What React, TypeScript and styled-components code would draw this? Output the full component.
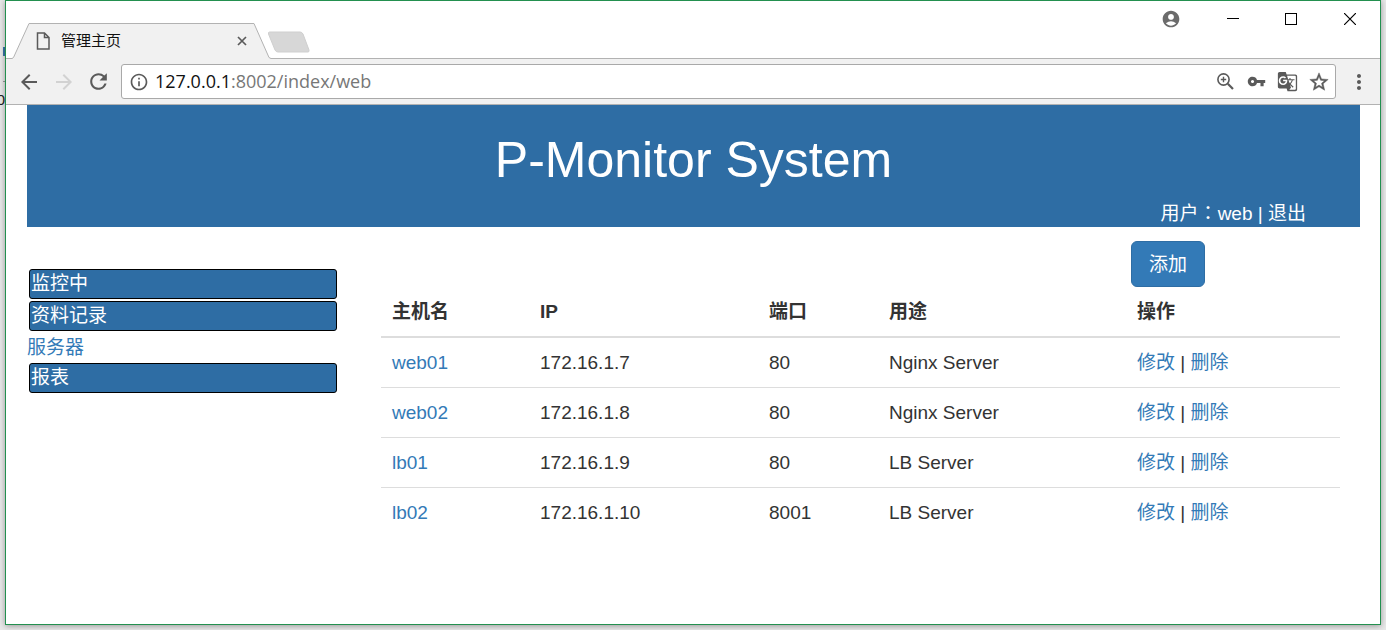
import React from "react";
import styled, { createGlobalStyle } from "styled-components";
import {
  MdAccountCircle,
  MdArrowBack,
  MdArrowForward,
  MdGTranslate,
  MdInfoOutline,
  MdMoreVert,
  MdRefresh,
  MdVpnKey,
} from "react-icons/md";

const GlobalStyle = createGlobalStyle`
  *, *::before, *::after { box-sizing: border-box; }
  body {
    margin: 0;
    background: #e8e8e8;
    color: #333;
    font: 19px/27px "Liberation Sans", "Noto Sans CJK SC", sans-serif;
  }
  button { font: inherit; cursor: pointer; }
  svg { display: block; }
`;

const Desktop = styled.div`
  position: relative;
  display: flex;
  min-height: 100vh;
  padding: 0 5px 5px;
  overflow: hidden;
`;

const BehindWindow = styled.div`
  position: absolute;
  top: 0;
  left: 0;
  width: 5px;
  height: 100%;
  overflow: hidden;
`;

const BehindPiece = styled.div<{ $top: number; $height: number; $color: string }>`
  position: absolute;
  top: ${(p) => p.$top}px;
  right: 0;
  width: 2px;
  height: ${(p) => p.$height}px;
  background: ${(p) => p.$color};
`;

const BehindText = styled.span`
  position: absolute;
  top: 90px;
  right: 0;
  font-size: 15px;
  line-height: 20px;
  color: #222;
`;

const Window = styled.div`
  position: relative;
  flex: 1;
  min-width: 0;
  border: 1px solid #23904f;
  background: #fff;
  box-shadow: 0 1px 6px rgba(0, 0, 0, 0.35);
`;

const TitleBar = styled.header`
  display: flex;
  justify-content: space-between;
  align-items: flex-start;
  height: 58px;
  border-bottom: 1px solid #b2b2b2;
`;

const TabStrip = styled.div`
  display: flex;
  align-items: flex-end;
  padding: 22px 0 0 6px;
`;

const Tab = styled.div`
  position: relative;
  display: flex;
  align-items: center;
  width: 259px;
  height: 36px;
  padding: 0 23px 0 24px;
  color: #111;
  font-size: 15px;
  line-height: 20px;
`;

const TabShape = styled.svg`
  position: absolute;
  inset: 0;
  width: 100%;
  height: 100%;
`;

const TabTitle = styled.span`
  position: relative;
  flex: 1;
  margin-left: 11px;
`;

const PageGlyph = styled.svg`
  position: relative;
`;

const IconButton = styled.button<{ $width: number; $height: number; $color?: string }>`
  position: relative;
  display: flex;
  flex: none;
  align-items: center;
  justify-content: center;
  width: ${(p) => p.$width}px;
  height: ${(p) => p.$height}px;
  padding: 0;
  border: 0;
  background: none;
  color: ${(p) => p.$color ?? "#5a5a5a"};
`;

const NewTab = styled(IconButton)`
  margin: 0 0 6px -4px;
`;

const WindowControls = styled.div`
  display: flex;
  align-items: center;
`;

const Toolbar = styled.div`
  display: flex;
  align-items: center;
  height: 46px;
  padding: 0 4px 0 5px;
  border-bottom: 1px solid #b2b2b2;
  background: #f1f1f1;
`;

const AddressBar = styled.div`
  display: flex;
  flex: 1;
  align-items: center;
  min-width: 0;
  height: 35px;
  margin: 0 6px 0 5px;
  padding: 0 1px 0 7px;
  border: 1px solid #a9a9a9;
  border-radius: 3px;
  background: #fff;
`;

const Address = styled.span`
  flex: 1;
  margin-left: 6px;
  overflow: hidden;
  color: #777;
  font-family: "Open Sans", sans-serif;
  font-size: 18px;
  white-space: nowrap;
`;

const Host = styled.span`
  color: #111;
`;

const Page = styled.div`
  padding: 0 20px 40px 21px;
`;

const Banner = styled.div`
  height: 122px;
  background: #2e6da4;
  color: #fff;
`;

const BannerTitle = styled.h1`
  margin: 0;
  padding-top: 27px;
  font-size: 50px;
  font-weight: 400;
  line-height: 56px;
  text-align: center;
`;

const UserLine = styled.div`
  padding: 10px 54px 0 0;
  text-align: right;
`;

const CenteredColon = styled.span`
  font-family: "Noto Sans CJK TC", sans-serif;
`;

const BannerLink = styled.a`
  color: #fff;
  text-decoration: none;
`;

const Columns = styled.div`
  display: grid;
  grid-template-columns: 312fr 959fr;
  gap: 42px;
  padding-right: 20px;
`;

const Sidebar = styled.nav`
  display: flex;
  flex-direction: column;
  gap: 2px;
  padding-top: 42px;
`;

const MenuHead = styled.button`
  height: 30px;
  margin: 0 2px;
  padding: 0 1px;
  border: 1px solid #000;
  border-radius: 3px;
  background: #2e6da4;
  color: #fff;
  line-height: 26px;
  text-align: left;
`;

const TextLink = styled.a`
  color: #337ab7;
  text-decoration: none;
`;

const MenuLink = styled(TextLink)`
  height: 28px;
  line-height: 30px;
`;

const Actions = styled.div`
  display: flex;
  justify-content: flex-end;
  padding: 14px 135px 0 0;
`;

const AddButton = styled.button`
  height: 46px;
  padding: 0 17px;
  border: 1px solid #2e6da4;
  border-radius: 6px;
  background: #337ab7;
  color: #fff;
`;

const HostTable = styled.table`
  width: 100%;
  border-spacing: 0;
  table-layout: fixed;
`;

const Head = styled.th<{ $width: number }>`
  width: ${(p) => p.$width}px;
  padding: 11px;
  border-bottom: 2px solid #ddd;
  text-align: left;
`;

const Cell = styled.td`
  height: 50px;
  padding: 0 11px;
  border-bottom: 1px solid #ddd;

  tr:last-child > & { border-bottom-color: transparent; }
`;

const columns = [
  { label: "主机名", width: 148 },
  { label: "IP", width: 229 },
  { label: "端口", width: 120 },
  { label: "用途", width: 248 },
  { label: "操作", width: 214 },
];

const hosts = [
  { name: "web01", ip: "172.16.1.7", port: "80", use: "Nginx Server" },
  { name: "web02", ip: "172.16.1.8", port: "80", use: "Nginx Server" },
  { name: "lb01", ip: "172.16.1.9", port: "80", use: "LB Server" },
  { name: "lb02", ip: "172.16.1.10", port: "8001", use: "LB Server" },
];

function ZoomIcon() {
  return (
    <svg width="17" height="17" viewBox="0 0 17 17" fill="none" stroke="currentColor">
      <circle cx="6.5" cy="6.5" r="5.6" strokeWidth="1.6" />
      <path d="M6.5 3.8 V9.2 M3.8 6.5 H9.2" strokeWidth="1.4" />
      <path d="M10.8 10.8 L16 16" strokeWidth="2.2" />
    </svg>
  );
}

function StarIcon() {
  return (
    <svg width="22" height="22" viewBox="0 0 24 24" fill="currentColor" stroke="currentColor" strokeWidth="0.5">
      <path d="M22 9.24l-7.19-.62L12 2 9.19 8.63 2 9.24l5.46 4.73L5.82 21 12 17.27 18.18 21l-1.63-7.03L22 9.24zM12 15.4l-3.76 2.27 1-4.28-3.32-2.88 4.38-.38L12 6.1l1.71 4.04 4.38.38-3.32 2.88 1 4.28L12 15.4z" />
    </svg>
  );
}

function BrowserTabs() {
  return (
    <TabStrip>
      <Tab>
        <TabShape viewBox="0 0 259 36" preserveAspectRatio="none" aria-hidden="true">
          <path d="M0 35.5 L1.5 34.5 L17 0.5 H242 L257 34.5 L259 35.5 V36 H0Z" fill="#f1f1f1" />
          <path d="M0 35.5 L1.5 34.5 L17 0.5 H242 L257 34.5 L259 35.5" fill="none" stroke="#b2b2b2" />
        </TabShape>
        <PageGlyph width="14" height="18" viewBox="0 0 14 18" fill="none" stroke="#5a5a5a" strokeWidth="1.5" aria-hidden="true">
          <path d="M1.5 1 H8.5 L13 5.5 V17 H1.5Z M8.5 1 V5.5 H13" />
        </PageGlyph>
        <TabTitle>管理主页</TabTitle>
        <IconButton $width={12} $height={20} aria-label="关闭标签页">
          <svg width="10" height="10" viewBox="0 0 10 10" stroke="currentColor" strokeWidth="1.7">
            <path d="M1 1 L9 9 M9 1 L1 9" />
          </svg>
        </IconButton>
      </Tab>
      <NewTab $width={43} $height={22} $color="#d7d7d7" aria-label="打开新的标签页">
        <svg width="43" height="22" viewBox="0 0 43 22" fill="currentColor" stroke="#cfcfcf">
          <path d="M2.5 1 H33 Q35 1 36 3 L42 19 Q42.5 21 41 21 H11 Q9 21 8 19 L1.5 3 Q1 1 2.5 1Z" />
        </svg>
      </NewTab>
    </TabStrip>
  );
}

function SystemButtons() {
  return (
    <WindowControls>
      <IconButton $width={66} $height={34} $color="#6b6b6b" aria-label="账户">
        <MdAccountCircle size={20} />
      </IconButton>
      <IconButton $width={58} $height={36} $color="#000" aria-label="最小化">
        <svg width="12" height="12" stroke="currentColor" shapeRendering="crispEdges">
          <path d="M0 5.5 H12" />
        </svg>
      </IconButton>
      <IconButton $width={58} $height={36} $color="#000" aria-label="最大化">
        <svg width="12" height="12" fill="none" stroke="currentColor" shapeRendering="crispEdges">
          <rect x="0.5" y="0.5" width="11" height="11" />
        </svg>
      </IconButton>
      <IconButton $width={60} $height={36} $color="#000" aria-label="关闭">
        <svg width="12" height="12" stroke="currentColor" strokeWidth="1.2">
          <path d="M0 0 L12 12 M12 0 L0 12" />
        </svg>
      </IconButton>
    </WindowControls>
  );
}

export default function App() {
  return (
    <Desktop>
      <GlobalStyle />
      <BehindWindow aria-hidden="true">
        <BehindPiece $top={47} $height={9} $color="#3a76a8" />
        <BehindPiece $top={81} $height={1} $color="#999" />
        <BehindText>0</BehindText>
      </BehindWindow>
      <Window>
        <TitleBar>
          <BrowserTabs />
          <SystemButtons />
        </TitleBar>
        <Toolbar>
          <IconButton $width={36} $height={35} aria-label="后退"><MdArrowBack size={24} /></IconButton>
          <IconButton $width={34} $height={35} $color="#d2d2d2" aria-label="前进"><MdArrowForward size={24} /></IconButton>
          <IconButton $width={35} $height={35} aria-label="重新加载"><MdRefresh size={25} /></IconButton>
          <AddressBar>
            <MdInfoOutline size={20} color="#5a5a5a" />
            <Address><Host>127.0.0.1</Host>:8002/index/web</Address>
            <IconButton $width={31} $height={31} aria-label="缩放"><ZoomIcon /></IconButton>
            <IconButton $width={31} $height={31} aria-label="密码"><MdVpnKey size={19} /></IconButton>
            <IconButton $width={31} $height={31} aria-label="翻译"><MdGTranslate size={21} /></IconButton>
            <IconButton $width={31} $height={31} aria-label="收藏"><StarIcon /></IconButton>
          </AddressBar>
          <IconButton $width={34} $height={35} aria-label="菜单"><MdMoreVert size={24} /></IconButton>
        </Toolbar>
        <Page>
          <Banner>
            <BannerTitle>P-Monitor System</BannerTitle>
            <UserLine>
              用户<CenteredColon lang="zh-TW">：</CenteredColon>web | <BannerLink href="#logout">退出</BannerLink>
            </UserLine>
          </Banner>
          <Columns>
            <Sidebar>
              <MenuHead>监控中</MenuHead>
              <MenuHead>资料记录</MenuHead>
              <MenuLink href="#servers">服务器</MenuLink>
              <MenuHead>报表</MenuHead>
            </Sidebar>
            <main>
              <Actions>
                <AddButton>添加</AddButton>
              </Actions>
              <HostTable>
                <thead>
                  <tr>
                    {columns.map((c) => (
                      <Head key={c.label} $width={c.width} scope="col">{c.label}</Head>
                    ))}
                  </tr>
                </thead>
                <tbody>
                  {hosts.map((h) => (
                    <tr key={h.name}>
                      <Cell><TextLink href={`#${h.name}`}>{h.name}</TextLink></Cell>
                      <Cell>{h.ip}</Cell>
                      <Cell>{h.port}</Cell>
                      <Cell>{h.use}</Cell>
                      <Cell>
                        <TextLink href={`#edit-${h.name}`}>修改</TextLink> |{" "}
                        <TextLink href={`#delete-${h.name}`}>删除</TextLink>
                      </Cell>
                    </tr>
                  ))}
                </tbody>
              </HostTable>
            </main>
          </Columns>
        </Page>
      </Window>
    </Desktop>
  );
}
